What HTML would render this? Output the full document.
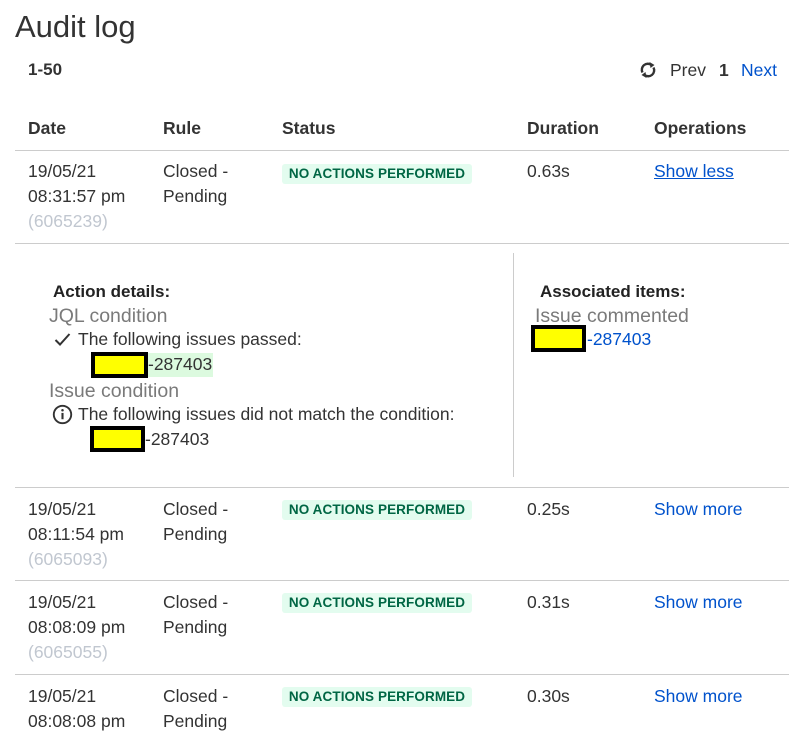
<!DOCTYPE html>
<html><head><meta charset="utf-8"><style>
body{margin:0;width:792px;height:734px;background:#fff;font-family:"Liberation Sans",sans-serif;color:#172b4d;position:relative;overflow:hidden}
.a{position:absolute;white-space:nowrap}
.t{font-size:17.5px;line-height:25px;color:#333}
.h{font-size:17.5px;font-weight:bold;color:#333}
.g{color:#c1c7d0}
.ln{position:absolute;left:15px;width:774px;height:1px;background:#ccc}
.b{position:absolute;left:282px;width:190px;height:20px;background:#e3fcef;border-radius:3px;color:#006644;font-weight:bold;font-size:13.5px;line-height:20px;text-align:center;letter-spacing:.1px}
.lk{color:#0052cc;font-size:17.5px}
.y{position:absolute;background:#ff0;border:4px solid #000;box-sizing:border-box}
.gr{color:#7a7a7a;font-size:19.5px}
</style></head><body>
<div class="a" style="left:15px;top:9px;font-size:31px;color:#333">Audit log</div>
<div class="a h" style="left:28px;top:60px;font-size:17px">1-50</div>
<svg class="a" style="left:639px;top:61px" width="18" height="18" viewBox="0 0 17 18"><path d="M3 11.5A6 6 0 0 1 12 4" fill="none" stroke="#333" stroke-width="2.4"/><path d="M14 6.5A6 6 0 0 1 5 14" fill="none" stroke="#333" stroke-width="2.4"/><path d="M10 1l5 3-4 3z" fill="#333"/><path d="M7 17l-5-3 4-3z" fill="#333"/></svg>
<div class="a t" style="left:670px;top:58px">Prev</div>
<div class="a h" style="left:719px;top:60px">1</div>
<div class="a lk" style="left:741px;top:60px">Next</div>

<div class="a h" style="left:28px;top:118px">Date</div>
<div class="a h" style="left:163px;top:118px">Rule</div>
<div class="a h" style="left:282px;top:118px">Status</div>
<div class="a h" style="left:527px;top:118px">Duration</div>
<div class="a h" style="left:654px;top:118px">Operations</div>
<div class="ln" style="top:150px"></div>

<div class="a t" style="left:28px;top:159px">19/05/21<br>08:31:57 pm<br><span class="g">(6065239)</span></div>
<div class="a t" style="left:163px;top:159px">Closed -<br>Pending</div>
<div class="b" style="top:164px">NO ACTIONS PERFORMED</div>
<div class="a t" style="left:527px;top:159px">0.63s</div>
<div class="a lk" style="left:654px;top:161px;text-decoration:underline">Show less</div>
<div class="ln" style="top:243px"></div>

<div class="a" style="left:513px;top:253px;width:1px;height:224px;background:#ccc"></div>
<div class="a h" style="left:53px;top:282px;color:#222;font-size:17px">Action details:</div>
<div class="a gr" style="left:49px;top:305px">JQL condition</div>
<svg class="a" style="left:54px;top:332px" width="17" height="15" viewBox="0 0 17 15"><path d="M1.5 8l4.5 4.5L15.5 2" fill="none" stroke="#333" stroke-width="2"/></svg>
<div class="a t" style="left:78px;top:327px">The following issues passed:</div>
<div class="a" style="left:148px;top:353px;width:65px;height:24px;background:#dcfadf"></div>
<div class="y" style="left:91px;top:352px;width:57px;height:26px"></div>
<div class="a t" style="left:148px;top:352px">-287403</div>
<div class="a gr" style="left:49px;top:380px">Issue condition</div>
<svg class="a" style="left:52px;top:404px" width="21" height="21" viewBox="0 0 20 20"><circle cx="10" cy="10" r="8.3" fill="none" stroke="#333" stroke-width="1.8"/><rect x="9" y="8.5" width="2" height="6" fill="#333"/><circle cx="10" cy="6" r="1.2" fill="#333"/></svg>
<div class="a t" style="left:78px;top:402px">The following issues did not match the condition:</div>
<div class="y" style="left:90px;top:426px;width:55px;height:26px"></div>
<div class="a t" style="left:145px;top:427px">-287403</div>

<div class="a h" style="left:540px;top:282px;color:#222;font-size:17px">Associated items:</div>
<div class="a gr" style="left:535px;top:305px">Issue commented</div>
<div class="y" style="left:531px;top:325px;width:55px;height:27px"></div>
<div class="a lk" style="left:587px;top:329px">-287403</div>
<div class="ln" style="top:487px"></div>

<div class="a t" style="left:28px;top:497px">19/05/21<br>08:11:54 pm<br><span class="g">(6065093)</span></div>
<div class="a t" style="left:163px;top:497px">Closed -<br>Pending</div>
<div class="b" style="top:500px">NO ACTIONS PERFORMED</div>
<div class="a t" style="left:527px;top:497px">0.25s</div>
<div class="a lk" style="left:654px;top:499px">Show more</div>
<div class="ln" style="top:580px"></div>

<div class="a t" style="left:28px;top:590px">19/05/21<br>08:08:09 pm<br><span class="g">(6065055)</span></div>
<div class="a t" style="left:163px;top:590px">Closed -<br>Pending</div>
<div class="b" style="top:593px">NO ACTIONS PERFORMED</div>
<div class="a t" style="left:527px;top:590px">0.31s</div>
<div class="a lk" style="left:654px;top:592px">Show more</div>
<div class="ln" style="top:674px"></div>

<div class="a t" style="left:28px;top:684px">19/05/21<br>08:08:08 pm</div>
<div class="a t" style="left:163px;top:684px">Closed -<br>Pending</div>
<div class="b" style="top:687px">NO ACTIONS PERFORMED</div>
<div class="a t" style="left:527px;top:684px">0.30s</div>
<div class="a lk" style="left:654px;top:686px">Show more</div>
</body></html>
